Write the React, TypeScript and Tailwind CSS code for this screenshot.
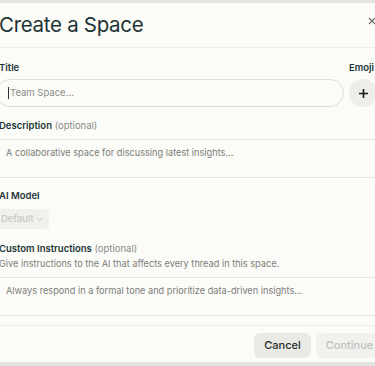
import React from "react";

const font = { fontFamily: "Inter, 'Liberation Sans', sans-serif" };

export default function App() {
  return (
    <div
      className="w-[375px] h-[366px] overflow-hidden bg-[#e4e4e1] pt-[3px]"
      style={font}
    >
      <div className="-ml-[3px] w-[386px] h-[359px] bg-[#fbfbf8] flex flex-col">
        {/* header */}
        <div className="h-[45px] flex items-center justify-between border-b border-[#ecece8] pl-[2px] pr-[7px]">
          <h1 className="text-[20.5px] leading-none text-[#1d3233] tracking-[-0.3px]">
            Create a Space
          </h1>
          <svg width="8" height="8" viewBox="0 0 8 8" className="mt-[-8px]">
            <path d="M1 1l6 6M7 1L1 7" stroke="#6b6b6b" strokeWidth="1.1" />
          </svg>
        </div>

        <div className="flex flex-col pl-[2px]">
          {/* title + emoji */}
          <div className="flex items-start gap-[5px] pt-[13px]">
            <div className="flex-1 flex flex-col gap-[4px]">
              <label className="text-[9.5px] leading-[14px] font-semibold text-[#223536]">Title</label>
              <div className="-ml-[3px] h-[28px] rounded-full border-[1.5px] border-[#deded9] flex items-center pl-[11px] text-[9.5px] text-[#8c8c8a]">
                <span className="w-px h-[12px] bg-[#333] mr-px" />
                Team Space...
              </div>
            </div>
            <div className="w-[34px] flex flex-col gap-[4px]">
              <label className="text-[9.5px] leading-[14px] font-semibold text-[#223536]">Emoji</label>
              <div className="w-[28px] h-[28px] rounded-full bg-[#ededea] flex items-center justify-center">
                <svg width="11" height="11" viewBox="0 0 11 11">
                  <path d="M5.5 1v9M1 5.5h9" stroke="#1a1a1a" strokeWidth="1.6" />
                </svg>
              </div>
            </div>
          </div>

          {/* description */}
          <div className="flex flex-col gap-[6px] pt-[12px]">
            <label className="text-[9.5px] leading-[14px] text-[#223536]">
              <span className="font-semibold">Description</span>{" "}
              <span className="text-[#8a8a88]">(optional)</span>
            </label>
            <div className="-ml-[4px] h-[39px] rounded-md border border-[#e6e6e1] px-[10px] pt-[6px] text-[9.2px] text-[#7d7d7a]">
              A collaborative space for discussing latest insights...
            </div>
          </div>

          {/* AI model */}
          <div className="flex flex-col gap-[6px] pt-[11px]">
            <label className="text-[9.5px] leading-[14px] font-semibold text-[#223536]">AI Model</label>
            <div className="-ml-[3px] w-[53px] h-[20px] rounded-[4px] bg-[#f0f0ed] flex items-center pl-[5px] gap-[2px] text-[9.5px] font-medium text-[#c9c9c4]">
              Default
              <svg width="7" height="5" viewBox="0 0 7 5">
                <path d="M1 1l2.5 2.5L6 1" fill="none" stroke="#c9c9c4" strokeWidth="1" />
              </svg>
            </div>
          </div>

          {/* instructions */}
          <div className="flex flex-col pt-[13px]">
            <label className="text-[9.5px] leading-[14px] text-[#223536]">
              <span className="font-semibold">Custom Instructions</span>{" "}
              <span className="text-[#8a8a88]">(optional)</span>
            </label>
            <p className="mt-[1px] text-[9.2px] leading-[14px] text-[#7d7d7a]">
              Give instructions to the AI that affects every thread in this space.
            </p>
            <div className="mt-[6px] -ml-[4px] h-[39px] rounded-md border border-[#e6e6e1] px-[10px] pt-[6px] text-[9.2px] text-[#7d7d7a]">
              Always respond in a formal tone and prioritize data-driven insights...
            </div>
          </div>
        </div>

        {/* footer */}
        <div className="mt-[9px] border-t border-[#ecece8] flex justify-end gap-[5px] pt-[7px]">
          <button className="w-[57px] h-[25px] rounded-md bg-[#e9e9e5] text-[11px] font-medium text-[#1e2b2b]">
            Cancel
          </button>
          <button className="w-[67px] h-[25px] rounded-md bg-[#f1f1ee] text-[11px] font-medium text-[#c2c2bd]">
            Continue
          </button>
        </div>
      </div>
    </div>
  );
}
